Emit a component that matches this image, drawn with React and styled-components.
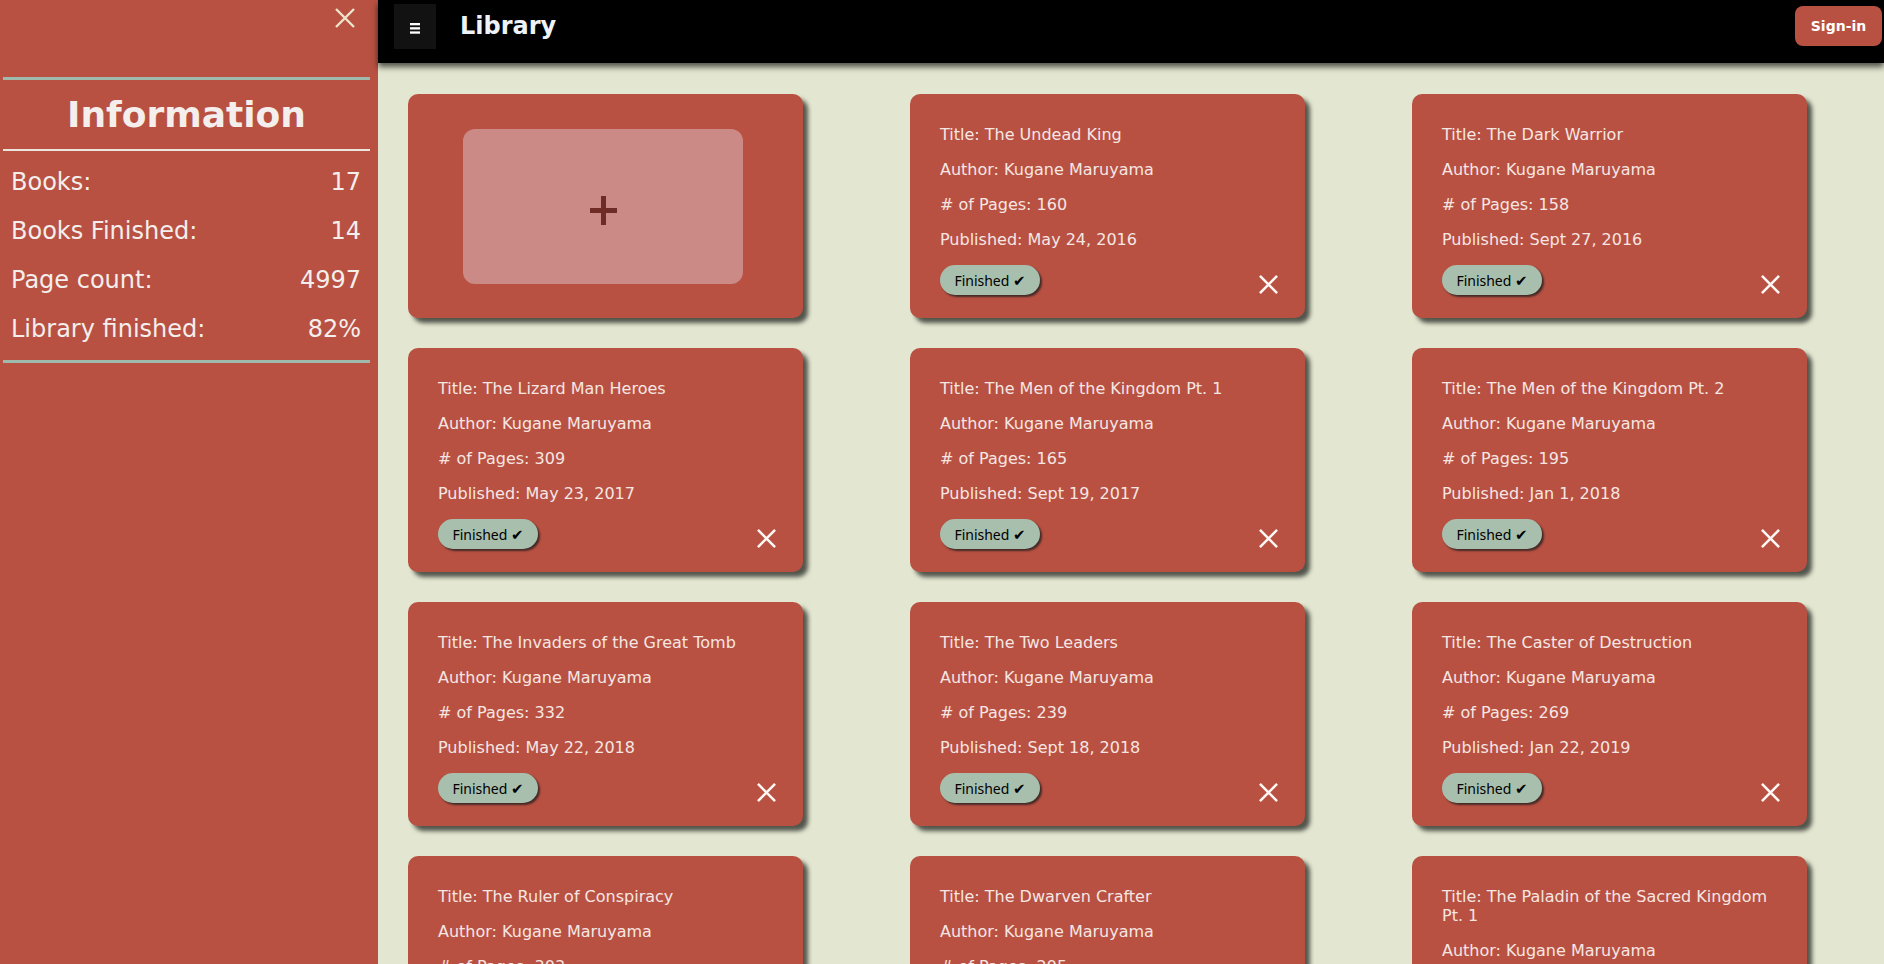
import React from 'react';
import styled, { createGlobalStyle } from 'styled-components';

const GlobalStyle = createGlobalStyle`
  html, body {
    margin: 0;
    padding: 0;
    overflow: hidden;
    background: #e3e6d0;
    font-family: "DejaVu Sans", Verdana, sans-serif;
  }
  * { box-sizing: border-box; }
`;

const books = [
  { title: 'The Undead King', pages: 160, published: 'May 24, 2016' },
  { title: 'The Dark Warrior', pages: 158, published: 'Sept 27, 2016' },
  { title: 'The Lizard Man Heroes', pages: 309, published: 'May 23, 2017' },
  { title: 'The Men of the Kingdom Pt. 1', pages: 165, published: 'Sept 19, 2017' },
  { title: 'The Men of the Kingdom Pt. 2', pages: 195, published: 'Jan 1, 2018' },
  { title: 'The Invaders of the Great Tomb', pages: 332, published: 'May 22, 2018' },
  { title: 'The Two Leaders', pages: 239, published: 'Sept 18, 2018' },
  { title: 'The Caster of Destruction', pages: 269, published: 'Jan 22, 2019' },
  { title: 'The Ruler of Conspiracy', pages: 303, published: 'May 28, 2019' },
  { title: 'The Dwarven Crafter', pages: 295, published: 'Sept 24, 2019' },
  { title: 'The Paladin of the Sacred Kingdom Pt. 1', pages: 342, published: 'Jan 28, 2020' },
];

const stats = [
  ['Books:', '17'],
  ['Books Finished:', '14'],
  ['Page count:', '4997'],
  ['Library finished:', '82%'],
];

const Layout = styled.div`
  display: flex;
  height: 100vh;
  overflow: hidden;
`;

const Sidebar = styled.aside`
  width: 378px;
  flex-shrink: 0;
  height: 100vh;
  background: #b85142;
  color: #f4eeec;
`;

const CloseRow = styled.div`
  height: 77px;
  display: flex;
  justify-content: flex-end;
  align-items: flex-start;
  padding: 8px 23px 0 0;
`;

const IconButton = styled.button`
  background: none;
  border: none;
  padding: 0;
  margin: 0;
  display: flex;
  cursor: pointer;
`;

const Divider = styled.div`
  margin: 0 8px 0 3px;
  height: ${p => (p.thin ? '2px' : '3px')};
  background: ${p => (p.thin ? '#ece7de' : '#9fbaad')};
`;

const Heading = styled.h2`
  margin: 14px 0;
  padding-right: 5px;
  font-size: 36px;
  line-height: 41px;
  font-weight: bold;
  text-align: center;
`;

const StatList = styled.div`
  display: flex;
  flex-direction: column;
  gap: 21px;
  padding: 17px 17px 17px 11px;
`;

const StatRow = styled.div`
  display: flex;
  justify-content: space-between;
  font-size: 24px;
  line-height: 28px;
`;

const Main = styled.main`
  flex: 1;
  display: flex;
  flex-direction: column;
  min-width: 0;
`;

const TopBar = styled.header`
  height: 63px;
  flex-shrink: 0;
  background: #000;
  display: flex;
  align-items: center;
  padding: 0 2px 11px 16px;
  box-shadow: 0 4px 6px rgba(0, 0, 0, 0.65);
  position: relative;
  z-index: 1;
`;

const MenuButton = styled.button`
  width: 42px;
  height: 45px;
  background: #121212;
  border: none;
  display: flex;
  align-items: center;
  justify-content: center;
  padding: 5px 0 0 0;
`;

const Title = styled.h1`
  margin: 0 0 0 24px;
  font-size: 24px;
  line-height: 28px;
  font-weight: bold;
  color: #eef3fa;
`;

const SignIn = styled.button`
  margin-left: auto;
  width: 87px;
  height: 40px;
  border: none;
  border-radius: 8px;
  background: #b85142;
  color: #fff;
  font-family: "DejaVu Sans", sans-serif;
  font-weight: bold;
  font-size: 14px;
`;

const Grid = styled.div`
  display: grid;
  grid-template-columns: repeat(3, 395px);
  column-gap: 107px;
  row-gap: 30px;
  padding: 31px 0 0 30px;
`;

const Card = styled.div`
  height: 224px;
  background: #b85142;
  border-radius: 10px;
  box-shadow: 5px 5px 4px rgba(20, 24, 20, 0.7);
  color: #f6e6e3;
  padding: 15px 30px 0 30px;
  display: flex;
  flex-direction: column;
  ${p => p.add && `
    align-items: center;
    justify-content: center;
    padding: 0 5px 0 0;
  `}
`;

const AddBox = styled.button`
  width: 280px;
  height: 155px;
  border: none;
  border-radius: 12px;
  background: #cc8a86;
  display: flex;
  align-items: center;
  justify-content: center;
  padding: 9px 0 0 0;
`;

const Line = styled.p`
  margin: 16px 0 0 0;
  font-size: 16px;
  line-height: 19px;
`;

const CardFooter = styled.div`
  margin-top: 16px;
  display: flex;
  justify-content: space-between;
  align-items: flex-end;
`;

const FinishedButton = styled.button`
  width: 100px;
  height: 30px;
  border: none;
  border-radius: 15px;
  background: #a8bfae;
  color: #000;
  font-family: "Noto Sans", "DejaVu Sans", sans-serif;
  font-size: 14px;
  box-shadow: 2px 2px 2px rgba(30, 30, 30, 0.75);
  padding: 0;
`;

const Check = styled.span`
  font-family: "DejaVu Sans", sans-serif;
  font-size: 15px;
`;

const CardClose = styled(IconButton)`
  margin: 0 -3px 1px 0;
`;

const XIcon = ({ size, color, width }) => (
  <svg width={size} height={size} viewBox="0 0 20 20">
    <path d="M1 1 L19 19 M19 1 L1 19" stroke={color} strokeWidth={width} fill="none" />
  </svg>
);

const MenuIcon = () => (
  <svg width="10" height="11" viewBox="0 0 10 11">
    <rect x="0" y="0" width="10" height="2.3" fill="#fff" />
    <rect x="0" y="4.2" width="10" height="2.3" fill="#fff" />
    <rect x="0" y="8.4" width="10" height="2.3" fill="#fff" />
  </svg>
);

const PlusIcon = () => (
  <svg width="27" height="29" viewBox="0 0 27 29">
    <rect x="11" y="0" width="5" height="29" fill="#6f2b25" />
    <rect x="0" y="12" width="27" height="5" fill="#6f2b25" />
  </svg>
);

function BookCard({ book }) {
  return (
    <Card>
      <Line>Title: {book.title}</Line>
      <Line>Author: Kugane Maruyama</Line>
      <Line># of Pages: {book.pages}</Line>
      <Line>Published: {book.published}</Line>
      <CardFooter>
        <FinishedButton>Finished <Check>✔</Check></FinishedButton>
        <CardClose aria-label="remove">
          <XIcon size={19} color="#fff7f4" width={2.7} />
        </CardClose>
      </CardFooter>
    </Card>
  );
}

export default function App() {
  return (
    <Layout>
      <GlobalStyle />
      <Sidebar>
        <CloseRow>
          <IconButton aria-label="close">
            <XIcon size={20} color="#ece4cc" width={2.4} />
          </IconButton>
        </CloseRow>
        <Divider />
        <Heading>Information</Heading>
        <Divider thin />
        <StatList>
          {stats.map(([label, value]) => (
            <StatRow key={label}>
              <span>{label}</span>
              <span>{value}</span>
            </StatRow>
          ))}
        </StatList>
        <Divider />
      </Sidebar>
      <Main>
        <TopBar>
          <MenuButton aria-label="menu">
            <MenuIcon />
          </MenuButton>
          <Title>Library</Title>
          <SignIn>Sign-in</SignIn>
        </TopBar>
        <Grid>
          <Card add>
            <AddBox aria-label="add book">
              <PlusIcon />
            </AddBox>
          </Card>
          {books.map(b => (
            <BookCard key={b.title} book={b} />
          ))}
        </Grid>
      </Main>
    </Layout>
  );
}
